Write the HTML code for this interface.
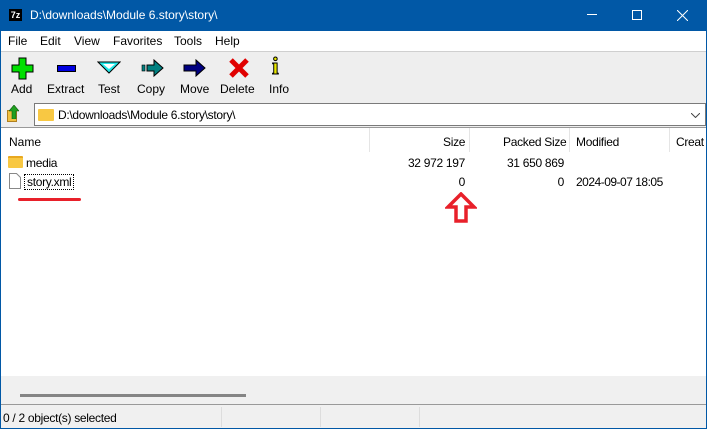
<!DOCTYPE html>
<html><head><meta charset="utf-8"><style>
*{margin:0;padding:0;box-sizing:border-box}
body{width:707px;height:429px;overflow:hidden;background:#0158a6;font-family:"Liberation Sans",sans-serif;font-size:12px;color:#000;position:relative}
.abs{position:absolute}
.title{left:0;top:0;width:707px;height:31px;background:#0158a6;color:#fff}
.menu{left:1px;top:31px;width:705px;height:20px;background:#fff}
.menu span{position:absolute;top:3px}
.tb{left:1px;top:51px;width:705px;height:51px;background:#eeeeee;border-top:1px solid #cfcfcf}
.tb .lbl{position:absolute;top:30px;font-size:12px}
.addr{left:1px;top:102px;width:705px;height:25px;background:#eeeeee}
.list{left:1px;top:127px;width:705px;height:277px;background:#fff;border-top:1px solid #999}
.hdr span{position:absolute;top:7px}
.sep{position:absolute;top:0;width:1px;height:24px;background:#e5e5e5}
.status{left:1px;top:404px;width:705px;height:24px;background:#f0f0f0;border-top:1px solid #999}
.n{letter-spacing:-0.3px}
.r{text-align:right}
</style></head><body>
<div class="abs title">
 <div class="abs" style="left:9px;top:9px;width:13px;height:12px;background:#fff;border:1px solid #000"></div>
 <div class="abs" style="left:10px;top:10px;width:11px;height:10px;background:#000;color:#fff;font-size:9px;font-weight:bold;line-height:10px;text-align:center">7z</div>
 <div class="abs" style="left:30px;top:8px;font-size:12px">D:\downloads\Module 6.story\story\</div>
 <div class="abs" style="left:587px;top:14px;width:10px;height:1px;background:#fff"></div>
 <div class="abs" style="left:632px;top:10px;width:10px;height:10px;border:1px solid #fff"></div>
 <svg class="abs" style="left:677px;top:10px" width="11" height="11"><path d="M0 0L11 11M11 0L0 11" stroke="#fff" stroke-width="1"/></svg>
</div>
<div class="abs menu">
 <span style="left:7px">File</span><span style="left:39px">Edit</span><span style="left:73px">View</span><span style="left:112px">Favorites</span><span style="left:173px">Tools</span><span style="left:214px">Help</span>
</div>
<div class="abs tb">
 <svg class="abs" style="left:10px;top:5px" width="24" height="24"><path d="M8 1h7v7h7v7h-7v7H8v-7H1V8h7z" fill="#00e000" stroke="#000" stroke-width="1"/></svg>
 <div class="abs" style="left:56px;top:13px;width:19px;height:7px;background:#0000e0;border:1px solid #000"></div>
 <svg class="abs" style="left:96px;top:9px" width="24" height="14"><path d="M1 1h22L12 12z" fill="#20e8e8" stroke="#000"/><path d="M6 3h12l-6 5z" fill="#fff"/></svg>
 <svg class="abs" style="left:140px;top:7px" width="24" height="18"><rect x="1" y="6" width="3" height="6" fill="#008080" stroke="#000" stroke-width=".6"/><path d="M6 6h7V1l9 8-9 8v-5H6z" fill="#008080" stroke="#000"/></svg>
 <svg class="abs" style="left:182px;top:7px" width="24" height="18"><path d="M1 6h12V1l9 8-9 8v-5H1z" fill="#000080" stroke="#000"/></svg>
 <svg class="abs" style="left:227px;top:5px" width="22" height="22"><path d="M3 3L19 19M19 3L3 19" stroke="#e00000" stroke-width="5"/></svg>
 <div class="abs" style="left:271px;top:2px;font-family:'Liberation Serif',serif;font-weight:bold;font-size:24px;color:#e8e800;-webkit-text-stroke:1px #000">i</div>
 <span class="lbl" style="left:10px">Add</span><span class="lbl" style="left:46px">Extract</span><span class="lbl" style="left:97px">Test</span><span class="lbl" style="left:136px">Copy</span><span class="lbl" style="left:179px">Move</span><span class="lbl" style="left:219px">Delete</span><span class="lbl" style="left:268px">Info</span>
</div>
<div class="abs addr">
 <div class="abs" style="left:6px;top:8px;width:10px;height:12px;background:#f0c040;border:1px solid #b08020"></div>
 <svg class="abs" style="left:8px;top:3px" width="10" height="14"><path d="M5 0L10 6H7v8H3V6H0z" fill="#20a020" stroke="#106010" stroke-width=".6"/></svg>
 <div class="abs" style="left:33px;top:1px;width:672px;height:23px;background:#fff;border:1px solid #7a7a7a"></div>
 <div class="abs" style="left:37px;top:7px;width:16px;height:12px;background:#f8c843;border-radius:1px"></div>
 <div class="abs n" style="left:57px;top:6px">D:\downloads\Module 6.story\story\</div>
 <svg class="abs" style="left:690px;top:11px" width="9" height="5"><path d="M0 0L4.5 4.5L9 0" stroke="#444" fill="none"/></svg>
</div>
<div class="abs list">
 <div class="hdr">
  <div class="sep" style="left:368px"></div><div class="sep" style="left:468px"></div><div class="sep" style="left:568px"></div><div class="sep" style="left:668px"></div>
  <span style="left:8px">Name</span><span class="n" style="left:442px">Size</span><span class="n" style="left:502px">Packed Size</span><span class="n" style="left:575px">Modified</span><span class="n" style="left:675px">Creat</span>
 </div>
 <div class="abs" style="left:7px;top:28px;width:15px;height:12px;background:#f8c843;border-radius:1px;border-top:2px solid #e8a820"></div>
 <span class="abs n" style="left:25px;top:28px">media</span>
 <span class="abs n r" style="left:364px;width:100px;top:28px">32 972 197</span>
 <span class="abs n r" style="left:463px;width:100px;top:28px">31 650 869</span>
 <svg class="abs" style="left:8px;top:45px" width="12" height="16"><path d="M.5 .5h7l4 4v11H.5z" fill="#fff" stroke="#888"/></svg>
 <span class="abs n" style="left:23px;top:46px;border:1px dotted #000;padding:0 2px;height:16px;line-height:14px">story.xml</span>
 <span class="abs n r" style="left:364px;width:100px;top:47px">0</span>
 <span class="abs n r" style="left:463px;width:100px;top:47px">0</span>
 <span class="abs n" style="left:575px;top:47px;letter-spacing:-0.5px">2024-09-07 18:05</span>
 <div class="abs" style="left:17px;top:70px;width:63px;height:3px;background:#e8202a;border-radius:2px"></div>
 <svg class="abs" style="left:444px;top:64px" width="32" height="32"><path d="M16 2L29 15H21V29H11V15H3z" fill="#fff" stroke="#e8202a" stroke-width="3.5" stroke-linejoin="miter"/></svg>
 <div class="abs" style="left:0;top:248px;width:705px;height:28px;background:#f0f0f0"></div>
 <div class="abs" style="left:19px;top:266px;width:226px;height:3px;background:#858585"></div>
</div>
<div class="abs status">
 <span class="abs n" style="left:2px;top:6px">0 / 2 object(s) selected</span>
 <div class="abs" style="left:220px;top:2px;width:1px;height:20px;background:#ddd"></div>
 <div class="abs" style="left:319px;top:2px;width:1px;height:20px;background:#ddd"></div>
 <div class="abs" style="left:418px;top:2px;width:1px;height:20px;background:#ddd"></div>
</div>
</body></html>
